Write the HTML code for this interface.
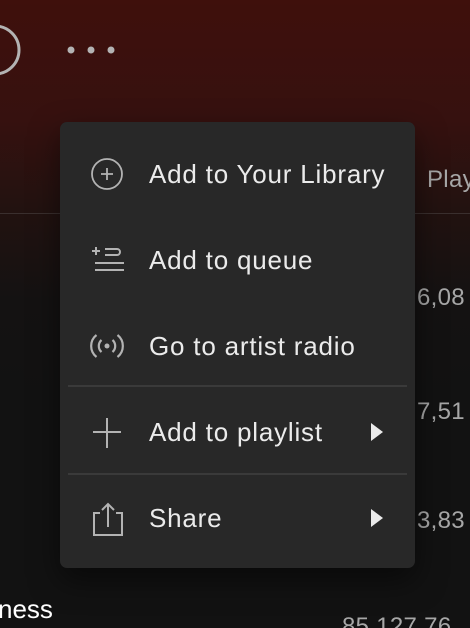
<!DOCTYPE html>
<html style="overflow:hidden;width:470px;height:628px"><head><style>
html,body{margin:0;padding:0}
body{width:470px;height:628px;overflow:hidden;position:relative;font-family:"Liberation Sans",sans-serif;
background:linear-gradient(180deg,#3f100c 0px,#36110f 120px,#221210 210px,#141212 300px,#121212 400px);}
.line{position:absolute;top:213px;left:0;width:470px;height:1px;background:#3a2f2e}
.menu{position:absolute;left:60px;top:122px;width:355px;height:446px;background:#282828;border-radius:7px;box-shadow:0 12px 30px rgba(0,0,0,.5)}
.item{position:absolute;left:0;width:355px;height:40px;color:#ebebeb;font-size:26px;line-height:40px;letter-spacing:0.8px}
.item span{position:absolute;left:89px;top:0;white-space:nowrap}
.item svg{position:absolute;left:30px;top:4px}
.div{position:absolute;left:8px;width:339px;height:2px;background:#3a3a3a}
.tri{position:absolute;left:311px;top:11px;width:0;height:0;border-left:12px solid #ebebeb;border-top:9px solid transparent;border-bottom:9px solid transparent}
.t{position:absolute;color:#a7a7a7;font-size:24px;letter-spacing:0.3px;white-space:nowrap}
</style></head><body>
<div class="line"></div>
<svg style="position:absolute;left:0;top:0" width="130" height="100">
<circle cx="-5" cy="50" r="24" fill="none" stroke="#b3b3b3" stroke-width="3"/>
<circle cx="71" cy="50" r="3.5" fill="#b3b3b3"/><circle cx="91" cy="50" r="3.5" fill="#b3b3b3"/><circle cx="111" cy="50" r="3.5" fill="#b3b3b3"/>
</svg>
<div class="t" style="left:427px;top:166px">Play</div>
<div class="t" style="left:417px;top:284px">6,08</div>
<div class="t" style="left:417px;top:398px">7,51</div>
<div class="t" style="left:417px;top:507px">3,83</div>
<div class="t" style="left:342px;top:613px">85,127,76</div>
<div style="position:absolute;left:-2px;top:594px;color:#fff;font-size:26px">ness</div>
<div class="menu">
 <div class="item" style="top:32px"><svg width="34" height="32" viewBox="0 0 34 32"><circle cx="17" cy="16" r="15" fill="none" stroke="#b3b3b3" stroke-width="1.8"/><path d="M17 10v12M11 16h12" stroke="#b3b3b3" stroke-width="1.8"/></svg><span>Add to Your Library</span></div>
 <div class="item" style="top:118px"><svg width="34" height="32" viewBox="0 0 34 32"><path d="M2 7h8M6 3v8M15 5h12a3 3 0 0 1 0 6h-12M5 19h29M5 26h29" stroke="#b3b3b3" stroke-width="2" fill="none"/></svg><span>Add to queue</span></div>
 <div class="item" style="top:204px"><svg width="34" height="32" viewBox="0 0 34 32"><circle cx="17" cy="16" r="2.5" fill="#b3b3b3"/><path d="M11.5 10a8 8 0 0 0 0 12M22.5 10a8 8 0 0 1 0 12M6.5 5a14 14 0 0 0 0 22M27.5 5a14 14 0 0 1 0 22" stroke="#b3b3b3" stroke-width="2.2" fill="none"/></svg><span>Go to artist radio</span></div>
 <div class="div" style="top:263px"></div>
 <div class="item" style="top:290px"><svg width="34" height="32" viewBox="0 0 34 32"><path d="M17 2v30M3 16h28" stroke="#b3b3b3" stroke-width="2" fill="none"/></svg><span>Add to playlist</span><div class="tri"></div></div>
 <div class="div" style="top:351px"></div>
 <div class="item" style="top:376px"><svg width="34" height="34" viewBox="0 0 34 34"><path d="M10 11H4v22h28V11h-6M18 25V2M12 8l6-6 6 6" stroke="#b3b3b3" stroke-width="2" fill="none"/></svg><span>Share</span><div class="tri"></div></div>
</div>
</body></html>
